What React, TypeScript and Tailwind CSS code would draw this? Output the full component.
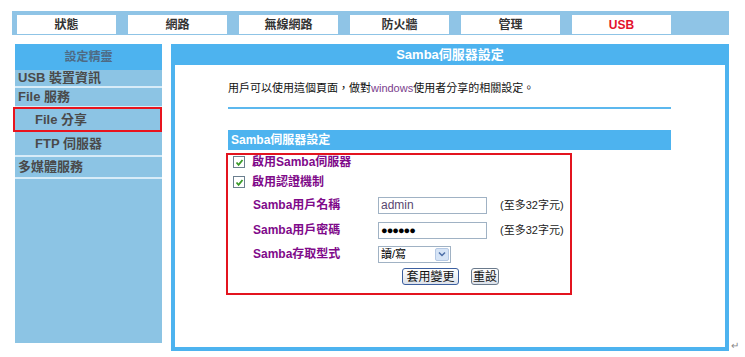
import React from 'react';

const FONT = { fontFamily: '"Liberation Sans", "Noto Sans CJK TC", sans-serif' };

const tabs = ['狀態', '網路', '無線網路', '防火牆', '管理', 'USB'];

const Check: React.FC = () => (
  <span className="flex h-[12px] w-[12px] items-center justify-center border border-[#6b7f8f] bg-white">
    <svg width="9" height="9" viewBox="0 0 9 9">
      <path d="M1.5 4.5 L3.6 6.8 L7.5 2" fill="none" stroke="#3a9a2a" strokeWidth="1.8" />
    </svg>
  </span>
);

const App: React.FC = () => {
  return (
    <div className="relative h-[357px] w-[745px] bg-white" style={FONT}>
      {/* Top tabs */}
      <div className="ml-[12px] mt-[11px] flex h-[24px] w-[717px] gap-[12px] bg-[#8fc4e6] pl-[5px] pt-[4px] pb-[1px]">
        {tabs.map((t) => (
          <div
            key={t}
            className={`flex w-[99px] items-center justify-center bg-white text-[12px] font-bold ${
              t === 'USB' ? 'text-[#e3122d]' : 'text-[#333]'
            }`}
          >
            {t}
          </div>
        ))}
      </div>

      <div className="mt-[9px] flex">
        {/* Sidebar */}
        <div className="ml-[15px] flex h-[299px] w-[147px] flex-col bg-[#8cc4e4]">
          <div className="flex h-[26px] items-center justify-center bg-[#4db3ef] text-[12px] font-bold text-[#4e6a84]">
            設定精靈
          </div>
          <div className="flex h-[18px] items-center border-b-2 border-[#d8ecf8] pl-[3px] text-[13px] font-bold text-[#4a4a4a]">
            USB 裝置資訊
          </div>
          <div className="flex h-[19px] items-center border-b border-[#d8ecf8] pl-[3px] text-[13px] font-bold text-[#4a4a4a]">
            File 服務
          </div>
          <div className="relative flex h-[25px] items-center pl-[20px] text-[13px] font-bold text-[#4a4a4a]">
            File 分享
            <div className="absolute left-[-2px] right-0 top-0 h-[25px] border-2 border-[#e8141e]" />
          </div>
          <div className="flex h-[25px] items-center border-b-2 border-[#d8ecf8] pl-[20px] text-[13px] font-bold text-[#4a4a4a]">
            FTP 伺服器
          </div>
          <div className="flex h-[22px] items-center border-b-2 border-[#d8ecf8] pl-[3px] text-[13px] font-bold text-[#4a4a4a]">
            多媒體服務
          </div>
        </div>

        {/* Main panel */}
        <div className="ml-[9px] flex h-[307px] w-[558px] flex-col border-x-[4px] border-b-[4px] border-[#4db3ef]">
          <div className="-mx-[4px] flex h-[21px] items-center justify-center bg-[#4db3ef] text-[13px] font-bold text-white">
            Samba伺服器設定
          </div>
          <div className="flex flex-1 flex-col bg-white pl-[53px]">
            <div className="flex h-[44px] w-[443px] items-end border-b-2 border-[#5cb8ee] pb-[11px] text-[11px] text-[#111]">
              <span>
                用戶可以使用這個頁面，做對<span className="text-[#7a3d8c]">windows</span>使用者分享的相關設定。
              </span>
            </div>
            <div className="mt-[21px] flex h-[20px] w-[443px] items-center bg-[#4db3ef] pl-[3px] text-[12px] font-bold text-white">
              Samba伺服器設定
            </div>
            <div className="-ml-[2px] mt-[3px] flex h-[142px] w-[346px] flex-col border-2 border-[#e3141f] pl-[5px]">
              <div className="flex h-[14px] items-center gap-[7px] text-[12px] font-bold text-[#800a8a]">
                <Check />
                啟用Samba伺服器
              </div>
              <div className="mt-[6px] flex h-[14px] items-center gap-[7px] text-[12px] font-bold text-[#800a8a]">
                <Check />
                啟用認證機制
              </div>
              <div className="mt-[7px] flex h-[18px] items-center text-[12px]">
                <span className="w-[145px] pl-[20px] font-bold text-[#800a8a]">Samba用戶名稱</span>
                <span className="flex h-[17px] w-[109px] items-center border border-[#a0b2c4] pl-[2px] text-[12px] text-[#5a4670]">
                  admin
                </span>
                <span className="ml-[13px] text-[11px] text-[#222]">(至多32字元)</span>
              </div>
              <div className="mt-[7px] flex h-[18px] items-center text-[12px]">
                <span className="w-[145px] pl-[20px] font-bold text-[#800a8a]">Samba用戶密碼</span>
                <span className="flex h-[17px] w-[109px] items-center border border-[#a0b2c4] pl-[2px] text-[11px] tracking-[-1px] text-black">
                  ●●●●●●
                </span>
                <span className="ml-[13px] text-[11px] text-[#222]">(至多32字元)</span>
              </div>
              <div className="mt-[6px] flex h-[18px] items-center text-[12px]">
                <span className="w-[145px] pl-[20px] font-bold text-[#800a8a]">Samba存取型式</span>
                <span className="flex h-[17px] w-[73px] items-center justify-between border border-[#a0b2c4] pl-[2px] text-[11px] text-black">
                  讀/寫
                  <span className="mr-[1px] flex h-[13px] w-[14px] items-center justify-center rounded-[2px] border border-[#b4c8e4] bg-[#d6e4f6]">
                    <svg width="8" height="6" viewBox="0 0 8 6">
                      <path d="M1 1.5 L4 4.5 L7 1.5" fill="none" stroke="#4d6fa8" strokeWidth="1.5" />
                    </svg>
                  </span>
                </span>
              </div>
              <div className="mt-[5px] flex items-center text-[12px]">
                <span className="ml-[169px] flex h-[17px] w-[57px] items-center justify-center rounded-[3px] border border-[#3c5fa0] bg-gradient-to-b from-white to-[#dde2ea] text-[#111]">
                  套用變更
                </span>
                <span className="ml-[12px] flex h-[17px] w-[28px] items-center justify-center rounded-[3px] border border-[#6a7a8c] bg-gradient-to-b from-white to-[#dde2ea] text-[#111]">
                  重設
                </span>
              </div>
            </div>
          </div>
        </div>
        <span className="ml-[2px] mt-[294px] text-[10px] text-[#888]">↵</span>
      </div>
    </div>
  );
};

export default App;
